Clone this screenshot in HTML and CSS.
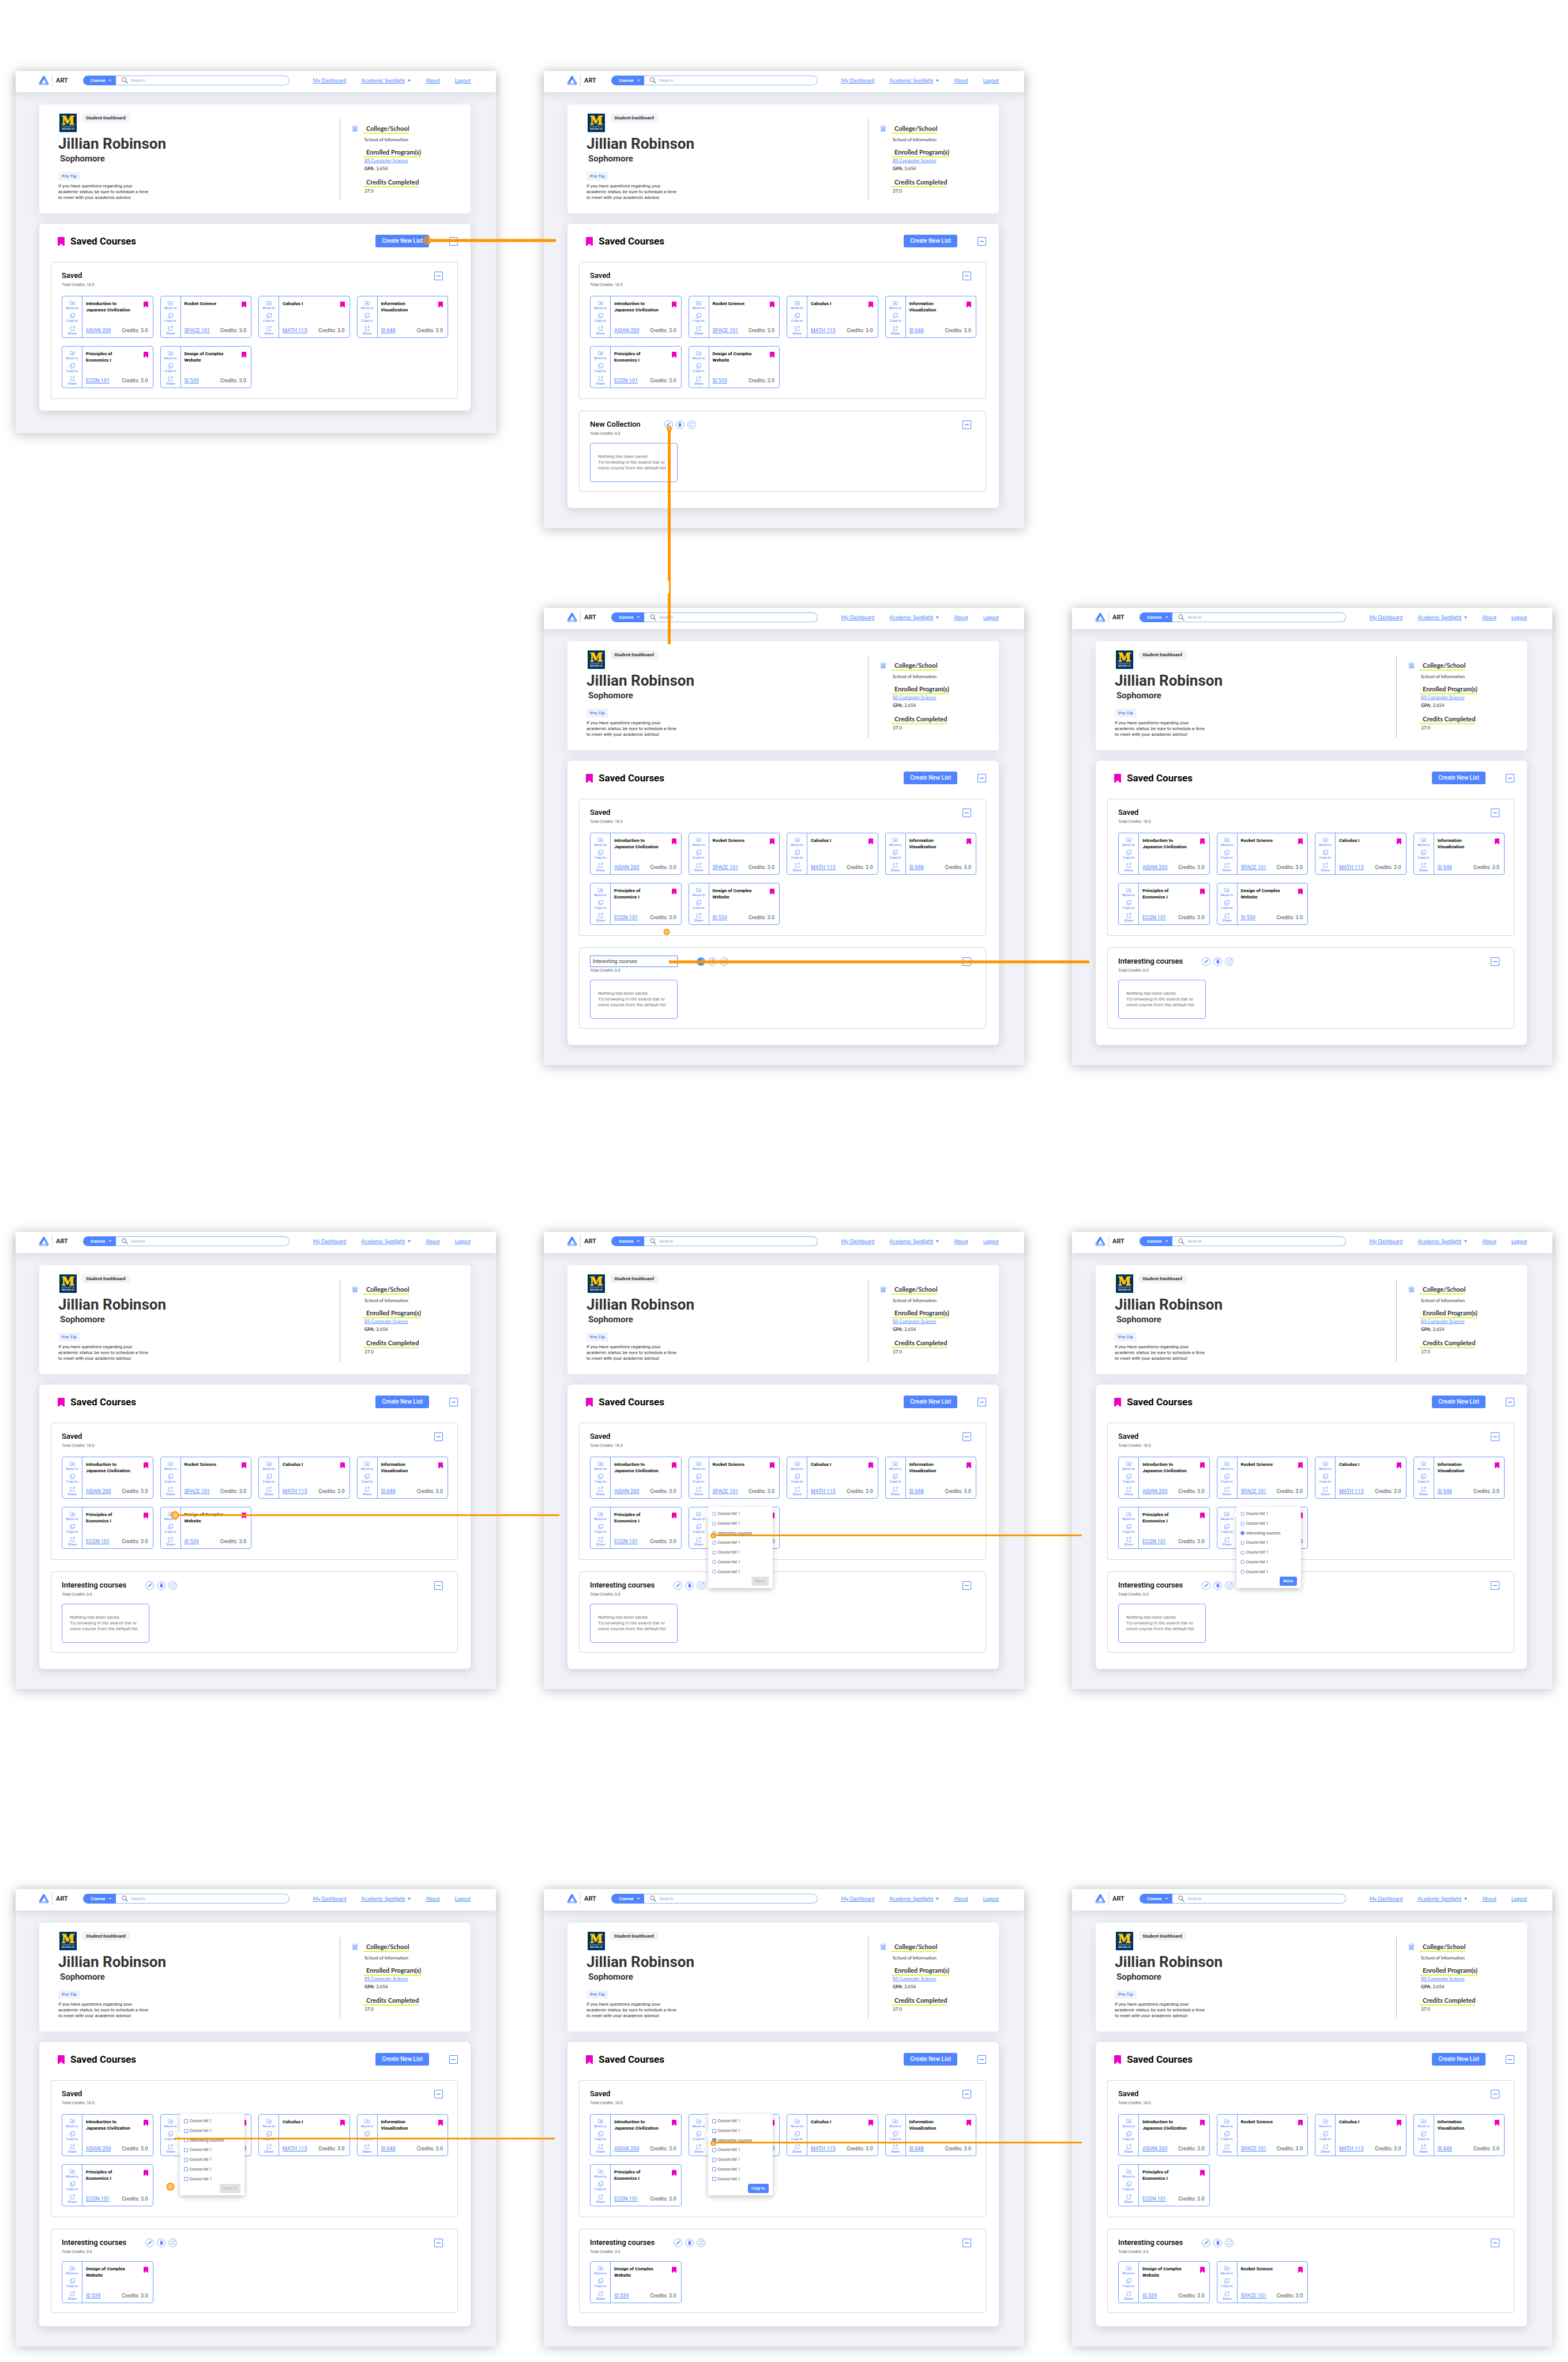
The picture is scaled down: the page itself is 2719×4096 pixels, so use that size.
FILE: index.html
```html
<!DOCTYPE html>
<html lang="en">
<head>
<meta charset="utf-8">
<title>ART – Saved Courses flow</title>
<link rel="stylesheet" href="styles.css">
</head>
<body>
<svg class="sprite" aria-hidden="true">
  <symbol id="i-logo" viewBox="0 0 24 22">
    <path d="M4 19H20" stroke="#a9c4ff" stroke-width="5" stroke-linecap="round"/>
    <path d="M12 3.2L21 18.6" stroke="#709cff" stroke-width="5" stroke-linecap="round"/>
    <path d="M12 3.2L3 18.6" stroke="#4a80ff" stroke-width="5" stroke-linecap="round"/>
    <circle cx="3.2" cy="18.4" r="1.4" fill="#fff"/>
  </symbol>
  <symbol id="i-search" viewBox="0 0 14 14">
    <circle cx="5.4" cy="5.4" r="4.3" fill="none" stroke="#8b8b8b" stroke-width="1.6"/>
    <path d="M8.6 8.8L13.2 13.4" stroke="#8b8b8b" stroke-width="2"/>
  </symbol>
  <symbol id="i-caret" viewBox="0 0 6 5"><path d="M0 0H6L3 5Z" fill="currentColor"/></symbol>
  <symbol id="i-college" viewBox="0 0 14 14">
    <g fill="none" stroke="#4e85fe" stroke-width="1">
      <path d="M1 4.5L7 .8L13 4.5V5.2H1Z"/>
      <path d="M3 6V11M5 6V11M7 6V11M9 6V11M11 6V11"/>
      <path d="M2 11.5H12M.6 13.2H13.4"/>
    </g>
  </symbol>
  <symbol id="i-bookmark" viewBox="0 0 16 20"><path d="M1.5 0H14.5Q16 0 16 1.5V19.4Q16 20 15 20L12.4 19.6L8 15L3.6 19.6L1 20Q0 20 0 19.4V1.5Q0 0 1.5 0Z" fill="#ee00c6"/></symbol>
  <symbol id="i-move" viewBox="0 0 12 11">
    <path d="M.7 10V1H4.6L5.8 2.6H11.3V10Z" fill="none" stroke="#7ea6ff" stroke-width="1.1"/>
    <path d="M3.6 6.3H7" stroke="#4e85fe" stroke-width="1.2"/><path d="M6.2 4.3L8.8 6.3L6.2 8.3Z" fill="#4e85fe"/>
  </symbol>
  <symbol id="i-copy" viewBox="0 0 12 12">
    <path d="M3.6 .7H11.3V8.4H3.6Z" fill="none" stroke="#6a98ff" stroke-width="1.1"/>
    <path d="M2.8 3.6H.7V11.3H8.4V9.2" fill="none" stroke="#8aaeff" stroke-width="1.1"/>
  </symbol>
  <symbol id="i-share" viewBox="0 0 12 12">
    <path d="M5 2.2H1.6V11H10.2V7.4" fill="none" stroke="#6a98ff" stroke-width="1.1"/>
    <path d="M5.6 6.6L10.4 1.8M7.4 1.2H11V4.8" fill="none" stroke="#6a98ff" stroke-width="1.1"/>
  </symbol>
  <symbol id="i-pencil" viewBox="0 0 12 12"><path d="M1 11L1.6 8.4L7.6 2.4L9.6 4.4L3.6 10.4ZM8.4 1.7L9.5 .7Q10 .4 10.5 .9L11.2 1.6Q11.6 2 11.2 2.6L10.3 3.6Z" fill="currentColor"/></symbol>
  <symbol id="i-trash" viewBox="0 0 12 12"><path d="M2 1.2H4.4L5 .5H7L7.6 1.2H10V2.4H2ZM2.6 3.2H9.4V10.6Q9.4 11.6 8.4 11.6H3.6Q2.6 11.6 2.6 10.6Z" fill="currentColor"/></symbol>
  <symbol id="i-minus" viewBox="0 0 13 13"><path d="M3 6.5H10" stroke="#4e85fe" stroke-width="1.4"/></symbol>
</svg>

<main class="board" id="board">
  <svg class="connectors" viewBox="0 0 2719 4096" aria-hidden="true">
    <g class="wire wire-thick">
      <path d="M747 417H964"/>
      <path d="M1160.5 746V1117" stroke-dasharray="261 22 88"/>
      <path d="M1161.5 1007V1029" class="wire-neck"/>
      <path d="M1160 1668H1889"/>
    </g>
    <g class="wire wire-thin">
      <path d="M310 2627.5H970"/>
      <path d="M1241 2662.5H1876"/>
      <path d="M302 3708.5H962"/>
      <path d="M1241 3715.5H1876"/>
    </g>
    <g class="dots">
      <circle cx="741" cy="417" r="6"/>
      <circle cx="1160.5" cy="743" r="3.5"/>
      <circle cx="1156" cy="1616" r="4.5"/>
      <circle cx="303.5" cy="2627.5" r="6"/>
      <circle cx="1237" cy="2663" r="4"/>
      <circle cx="295.5" cy="3792" r="6"/>
      <circle cx="1237" cy="3716.5" r="4"/>
    </g>
  </svg>
</main>
<script src="board.js"></script>
</body>
</html>
```

FILE: styles.css
```css
* { box-sizing: border-box; }

body {
  margin: 0;
  background: #fff;
  color: #333;
  font: 8px/10px Roboto, "Liberation Sans", sans-serif;
}

h1, h2, h3, h4, p, dl, dd, fieldset { margin: 0; padding: 0; border: 0; }
button, input, select { font: inherit; color: inherit; margin: 0; padding: 0; border: 0; background: none; }
a { color: #4e85fe; text-decoration: underline; }
svg { display: block; }
.sprite { position: absolute; width: 0; height: 0; }

/* Board */
.board { position: relative; padding: 123px 27px 27px; }
.row { display: grid; grid-template-columns: repeat(3, 1fr); gap: 83px; align-items: start; }
.row-edit { margin-top: 138px; }
.row-edit .frame:first-child { grid-column: 2; }
.row-move { margin-top: 289px; }
.row-copy { margin-top: 347px; }

.connectors { position: absolute; left: 0; top: 0; width: 100%; z-index: 5; pointer-events: none; }
.wire { fill: none; stroke: #ff9500; }
.wire-thick { stroke-width: 5; }
.wire-thin { stroke-width: 3; }
.wire-neck { stroke-width: 3; }
.dots { fill: rgba(255, 149, 0, .55); stroke: #ff9500; stroke-width: 2; }

/* Frame */
.frame { background: #f0f2f7; box-shadow: 0 2px 20px rgba(0, 0, 0, .26); padding-bottom: 35px; }
.frame-single { padding-bottom: 39px; }

.topbar {
  display: flex; align-items: center;
  position: relative;
  padding: 6px 44px 10px 40px;
  background: #fff;
  box-shadow: 0 4px 14px rgba(30, 45, 70, .12);
}
.topbar-logo { width: 18px; height: 17px; }
.brand {
  margin-left: 5px; padding-left: 6px; width: 54px;
  border-left: 1px solid #d2d2d2;
  font-size: 11px; font-weight: 700; line-height: 21px; color: #2c2c2c;
}
.search { display: flex; flex: 1; height: 17px; }
.scope {
  display: flex; align-items: center; position: relative;
  width: 57px; padding-left: 13px;
  border-radius: 9px 0 0 9px;
  background: #4e85fe; color: #fff;
}
.scope select { appearance: none; width: 44px; font-size: 8px; font-weight: 700; line-height: 10px; }
.scope svg { position: absolute; right: 8px; top: 7px; width: 4px; height: 3px; pointer-events: none; }
.query {
  display: flex; align-items: center; gap: 5px; flex: 1;
  padding-left: 10px;
  border: 1px solid #8fb1ff; border-left: 0;
  border-radius: 0 9px 9px 0;
}
.query svg { width: 11px; height: 11px; }
.query input { flex: 1; outline: 0; }
.query input::placeholder { color: #a9adb5; opacity: 1; }
.nav { display: flex; gap: 26px; margin-left: 40px; font: 9px/12px Lato, sans-serif; }
.nav span { display: flex; align-items: center; gap: 5px; color: #4e85fe; }
.nav svg { width: 5px; height: 4px; }

/* Profile */
.profile {
  display: flex; justify-content: space-between;
  margin: 21px 44px 0 41px; padding: 16px 0 22px 33px;
  border-radius: 6px; background: #fff;
  box-shadow: 0 4px 22px rgba(30, 45, 70, .1);
}
.ident { display: flex; align-items: flex-start; gap: 9px; padding-left: 2px; }
.ident svg { width: 30px; height: 32px; }
.crest-letter { font: 700 20px "DejaVu Serif", serif; fill: #ffcb05; stroke: #ffcb05; stroke-width: 1; text-anchor: middle; }
.crest-small { font: 3px "Liberation Serif", serif; fill: #cfd8e2; text-anchor: middle; }
.crest-name { font: 700 4px "Liberation Serif", serif; fill: #fff; text-anchor: middle; }
.tag { display: inline-block; padding: 0 7px; background: #f1f3f8; font-weight: 700; line-height: 15px; color: #2c2c2c; border-radius: 1px; }
.tag-tip { margin-top: 15px; padding: 0 6px; color: #4e85fe; }
.person { margin-top: 6px; font-size: 26px; line-height: 28px; font-weight: 700; }
.year { margin: 4px 0 0 3px; font-size: 15px; line-height: 16px; font-weight: 700; }
.tip { margin-top: 5px; color: #2c2c2c; }

.facts {
  display: flex; gap: 9px;
  width: 227px; margin-top: 9px; padding: 10px 0 0 20px;
  border-left: 1px solid #b9b9b9;
  font-family: Lato, sans-serif;
}
.facts > svg { width: 11px; height: 11px; margin-top: 1px; }
.facts dt {
  width: max-content; padding-left: 5px;
  border-bottom: 2px solid #dff53c;
  font-size: 11px; line-height: 14px; font-weight: 700;
}
.facts dd { padding-left: 2px; }
.fact-school { margin: 5px 0 10px; }
.fact-gpa { margin: 4px 0 12px; }
.fact-total { margin-top: 1px; }

/* Saved courses panel */
.panel {
  margin: 18px 44px 0 41px; padding: 19px 22px 28px 20px;
  position: relative;
  border-radius: 7px; background: #fff;
  box-shadow: 0 3px 16px rgba(20, 30, 50, .17);
}
.panel-single { padding-bottom: 20px; }
.panel-filled { padding-bottom: 23px; }
.panel-head { display: flex; align-items: center; margin-bottom: 25px; padding-left: 12px; }
.panel-head svg { width: 12px; height: 15px; }
.panel-head h2 { flex: 1; margin-left: 10px; font-size: 17px; line-height: 22px; font-weight: 700; color: #000; }
.primary { border-radius: 3px; background: #4e85fe; color: #fff; font-weight: 500; }
.primary:disabled { background: #e2e2e2; color: #bcbcbc; }
.create { margin-right: 35px; padding: 0 11px; font: 500 10px/22px Roboto, sans-serif; }
.toggle { width: 15px; height: 15px; border: 1px solid #4e85fe; border-radius: 1px; }
.panel-head .toggle svg, .toggle svg { width: 13px; height: 13px; }

.list { padding: 15px 16px 16px 18px; border: 1px solid #d3d4d6; border-radius: 4px; }
.list-saved { padding-bottom: 18px; margin-bottom: 20px; }
.panel-single .list { margin-bottom: 0; }
.list-head { display: flex; align-items: center; height: 16px; margin-right: 9px; }
.list-head h3 { font-size: 13px; line-height: 16px; font-weight: 500; color: #000; }
.list-head .toggle { margin-left: auto; }
.list-actions { display: flex; gap: 5px; margin-left: 33px; }
.list-new .list-actions { margin-left: 41px; }
.round {
  display: grid; place-items: center;
  width: 15px; height: 15px;
  border: 1px solid #86abff; border-radius: 50%;
  color: #4e85fe;
}
.round svg { width: 8px; height: 8px; }
.round-on { background: #4e85fe; color: #fff; }
.rename { width: 152px; height: 20px; padding: 0 4px; border: 1px solid #4e85fe; font-size: 9px; }
.credits { margin: 3px 0 11px; font-size: 7px; color: #5c5c5c; }
.list-saved .credits { margin-bottom: 14px; }
.empty {
  width: 152px; padding: 18px 0 18px 13px;
  border: 1px solid #6f9bff; border-radius: 4px;
  color: #747474;
}
.cards { display: grid; grid-template-columns: repeat(4, 1fr); gap: 14px 12px; }

/* Course card */
.card { position: relative; display: flex; border: 1px solid #6f9bff; border-radius: 4px; }
.tools {
  display: flex; flex-direction: column; gap: 6px;
  width: 35px; padding: 7px 0 4px;
  border-right: 1px solid #6f9bff;
}
.tools button { display: flex; flex-direction: column; align-items: center; font-size: 6px; line-height: 7px; font-weight: 500; color: #5f90ff; }
.tools svg { width: 9px; height: 9px; }
.course { display: flex; flex-direction: column; justify-content: space-between; flex: 1; padding: 7px 8px 7px 6px; }
.course-top, .course-foot { display: flex; justify-content: space-between; }
.course h4 { font-size: 8px; line-height: 11px; font-weight: 700; color: #000; }
.course-top svg { width: 8px; height: 10px; margin-top: 2px; }
.course-foot { font-size: 9px; color: #4a4a4a; }

/* Popover */
.popover {
  position: absolute; z-index: 3; left: 33px; top: -1px;
  width: 112px; padding: 4px 7px;
  border-radius: 2px; background: #fff;
  box-shadow: 0 3px 10px rgba(0, 0, 0, .24);
  font-size: 7px;
}
.popover::before {
  content: ""; position: absolute; left: -5px; top: 8px;
  border: 5px solid transparent; border-left: 0; border-right-color: #fff;
}
.popover-copy::before { top: 30px; }
.popover fieldset { display: grid; grid-auto-rows: 1fr; height: 117px; }
.popover label { display: flex; align-items: center; gap: 3px; color: #4a4a4a; }
.popover input { appearance: none; width: 7px; height: 7px; border: 1px solid #5f90ff; border-radius: 1px; background: #fff; }
.popover input[type="radio"] { border-radius: 50%; }
.popover input:checked { background: #4e85fe; }
.popover .primary { display: block; margin-left: auto; padding: 0 6px; line-height: 16px; }
```

FILE: board.js
```js
const icon = (name) => `<svg aria-hidden="true"><use href="#i-${name}"/></svg>`;

const COURSES = {
  asian: ['Introduction to<br>Japanese Civilization', 'ASIAN 200'],
  space: ['Rocket Science', 'SPACE 101'],
  math: ['Calculus I', 'MATH 115'],
  viz: ['Information<br>Visualization', 'SI 648'],
  econ: ['Principles of<br>Economics I', 'ECON 101'],
  web: ['Design of Complex<br>Website', 'SI 539'],
};
const ALL = ['asian', 'space', 'math', 'viz', 'econ', 'web'];
const REST = ['asian', 'space', 'math', 'viz', 'econ'];
const INTERESTING = { kind: 'named', title: 'Interesting courses', credits: '0.0', courses: [] };

const ROWS = [
  { name: 'create', frames: [
    { saved: ALL },
    { saved: ALL, list: { kind: 'new', title: 'New Collection', credits: '0.0', courses: [] } },
  ] },
  { name: 'edit', frames: [
    { saved: ALL, list: { ...INTERESTING, kind: 'edit' } },
    { saved: ALL, list: INTERESTING },
  ] },
  { name: 'move', frames: [
    { saved: ALL, list: INTERESTING },
    { saved: ALL, list: INTERESTING, popover: { on: 'web', mode: 'move' } },
    { saved: ALL, list: INTERESTING, popover: { on: 'web', mode: 'move', chosen: true } },
  ] },
  { name: 'copy', frames: [
    { saved: REST, list: { ...INTERESTING, credits: '3.0', courses: ['web'] }, popover: { on: 'space', mode: 'copy' } },
    { saved: REST, list: { ...INTERESTING, credits: '3.0', courses: ['web'] }, popover: { on: 'space', mode: 'copy', chosen: true } },
    { saved: REST, list: { ...INTERESTING, credits: '3.0', courses: ['web', 'space'] } },
  ] },
];

const toggle = `<button class="toggle" type="button" aria-label="Collapse">${icon('minus')}</button>`;
const crest = `<svg viewBox="0 0 30 32" role="img" aria-label="University of Michigan"><rect width="30" height="32" fill="#00305f"/>
  <text x="15" y="19" class="crest-letter">M</text><text x="15" y="24" class="crest-small">UNIVERSITY OF</text><text x="15" y="28" class="crest-name">MICHIGAN</text></svg>`;

function popover({ mode, chosen }, id) {
  const type = mode === 'move' ? 'radio' : 'checkbox';
  const options = [0, 1, 2, 3, 4, 5, 6].map((i) => `
    <label><input type="${type}" name="target-${id}"${chosen && i === 2 ? ' checked' : ''}>${i === 2 ? 'Interesting courses' : 'Course list 1'}</label>`).join('');
  return `<form class="popover popover-${mode}"><fieldset aria-label="Lists">${options}</fieldset>
    <button class="primary" type="button"${chosen ? '' : ' disabled'}>${mode === 'move' ? 'Move' : 'Copy to'}</button></form>`;
}

function card(key, pop, id) {
  const [title, code] = COURSES[key];
  return `<article class="card">
    <div class="tools">
      <button type="button">${icon('move')}Move to</button>
      <button type="button">${icon('copy')}Copy to</button>
      <button type="button">${icon('share')}Share</button>
    </div>
    <div class="course">
      <div class="course-top"><h4>${title}</h4>${icon('bookmark')}</div>
      <div class="course-foot"><a href="#">${code}</a><span>Credits: 3.0</span></div>
    </div>
    ${pop && pop.on === key ? popover(pop, id) : ''}
  </article>`;
}

function customList(list) {
  const editing = list.kind === 'edit';
  const heading = editing
    ? `<input class="rename" type="text" aria-label="List name" value="${list.title}">`
    : `<h3>${list.title}</h3>`;
  const body = list.courses.length
    ? `<div class="cards">${list.courses.map((c) => card(c)).join('')}</div>`
    : '<p class="empty">Nothing has been saved.<br>Try browsing in the search bar or<br>move course from the default list</p>';
  return `<section class="list list-${list.kind}">
    <div class="list-head">${heading}
      <div class="list-actions">
        <button class="round${editing ? ' round-on' : ''}" type="button" aria-label="Rename">${icon('pencil')}</button>
        <button class="round" type="button" aria-label="Delete">${icon('trash')}</button>
        <button class="round" type="button" aria-label="Share">${icon('share')}</button>
      </div>${toggle}
    </div>
    <p class="credits">Total Credits: ${list.credits}</p>
    ${body}
  </section>`;
}

function frame({ saved, list, popover: pop }, id) {
  const size = !list ? ' panel-single' : list.courses.length ? ' panel-filled' : '';
  return `<article class="frame${list ? '' : ' frame-single'}">
    <header class="topbar">
      <svg class="topbar-logo" aria-hidden="true"><use href="#i-logo"/></svg>
      <span class="brand">ART</span>
      <div class="search">
        <div class="scope"><select aria-label="Search in"><option>Course</option></select>${icon('caret')}</div>
        <label class="query">${icon('search')}<input type="search" aria-label="Search" placeholder="Search"></label>
      </div>
      <nav class="nav">
        <a href="#">My Dashboard</a><span><a href="#">Academic Spotlight</a>${icon('caret')}</span><a href="#">About</a><a href="#">Logout</a>
      </nav>
    </header>
    <section class="profile">
      <div>
        <div class="ident">${crest}<span class="tag">Student Dashboard</span></div>
        <h1 class="person">Jillian Robinson</h1>
        <p class="year">Sophomore</p>
        <span class="tag tag-tip">Pro Tip</span>
        <p class="tip">If you have questions regarding your<br>academic status, be sure to schedule a time<br>to meet with your academic advisor</p>
      </div>
      <div class="facts">${icon('college')}
        <dl>
          <dt>College/School</dt><dd class="fact-school">School of Information</dd>
          <dt>Enrolled Program(s)</dt><dd><a href="#">BS Computer Science</a></dd>
          <dd class="fact-gpa"><b>GPA:</b> 3.654</dd>
          <dt>Credits Completed</dt><dd class="fact-total">37.0</dd>
        </dl>
      </div>
    </section>
    <section class="panel${size}">
      <div class="panel-head">${icon('bookmark')}<h2>Saved Courses</h2>
        <button class="primary create" type="button">Create New List</button>${toggle}
      </div>
      <section class="list list-saved">
        <div class="list-head"><h3>Saved</h3>${toggle}</div>
        <p class="credits">Total Credits: 18.0</p>
        <div class="cards">${saved.map((c) => card(c, pop, id)).join('')}</div>
      </section>
      ${list ? customList(list) : ''}
    </section>
  </article>`;
}

document.getElementById('board').insertAdjacentHTML('afterbegin', ROWS.map((row, r) =>
  `<section class="row row-${row.name}">${row.frames.map((f, i) => frame(f, `${r}-${i}`)).join('')}</section>`).join(''));
```
